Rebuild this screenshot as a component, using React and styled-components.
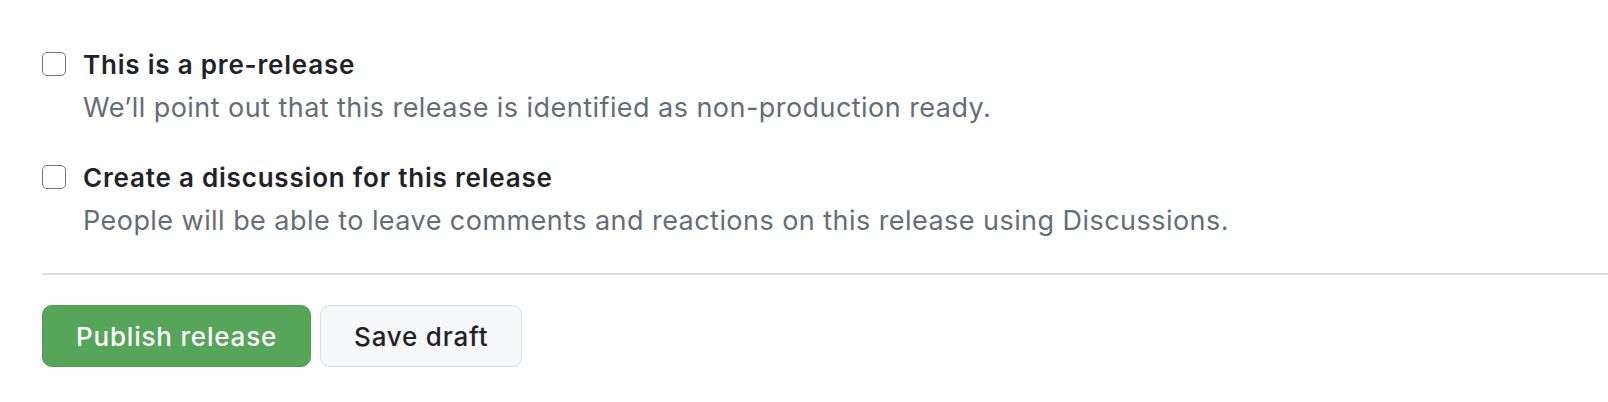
import React from 'react'
import styled, { createGlobalStyle } from 'styled-components'

const GlobalStyle = createGlobalStyle`
    html, body {
        margin: 0;
        padding: 0;
        background: #ffffff;
    }
    body {
        font-family: Inter, "Liberation Sans", sans-serif;
        color: #1f2328;
    }
`

const options = [
    {
        id: 'prerelease',
        title: 'This is a pre-release',
        note: 'We’ll point out that this release is identified as non-production ready.',
    },
    {
        id: 'discussion',
        title: 'Create a discussion for this release',
        note: 'People will be able to leave comments and reactions on this release using Discussions.',
    },
]

const App = () => {
    return (
        <>
            <GlobalStyle />
            <Form onSubmit={(e) => e.preventDefault()}>
                <OptionList>
                    {options.map((opt) => (
                        <Option key={opt.id}>
                            <Checkbox type="checkbox" id={opt.id} />
                            <OptionText>
                                <Title htmlFor={opt.id}>{opt.title}</Title>
                                <Note>{opt.note}</Note>
                            </OptionText>
                        </Option>
                    ))}
                </OptionList>

                <Divider />

                <Actions>
                    <Button type="submit" $primary>
                        Publish release
                    </Button>
                    <Button type="button">Save draft</Button>
                </Actions>
            </Form>
        </>
    )
}

export default App

const Form = styled.form`
    padding: 49px 0 0 42px;
`

const OptionList = styled.div`
    display: flex;
    flex-direction: column;
    gap: 38px;
`

const Option = styled.div`
    display: grid;
    grid-template-columns: 24px 1fr;
    column-gap: 17px;
    align-items: start;
`

const Checkbox = styled.input`
    appearance: none;
    margin: 3px 0 0 0;
    width: 24px;
    height: 24px;
    border: 1.5px solid #6e7781;
    border-radius: 5px;
    background: #ffffff;
    box-sizing: border-box;
`

const OptionText = styled.div`
    display: flex;
    flex-direction: column;
`

const Title = styled.label`
    font-weight: 600;
    font-size: 26px;
    letter-spacing: 0.8px;
    line-height: 32px;
    color: #1f2328;
`

const Note = styled.p`
    margin: 11px 0 0 0;
    font-size: 27px;
    letter-spacing: 0.45px;
    line-height: 32px;
    color: #656d76;
`

const Divider = styled.hr`
    margin: 36px 0 0 0;
    border: 0;
    border-top: 2px solid #d8dee4;
`

const Actions = styled.div`
    margin-top: 30px;
    display: flex;
    gap: 9px;
`

const Button = styled.button`
    height: 62px;
    padding: 0 33px;
    border-radius: 10px;
    font-family: Inter, "Liberation Sans", sans-serif;
    font-size: 26px;
    letter-spacing: 0.8px;
    font-weight: 500;
    border: 1.5px solid ${(p) => (p.$primary ? '#4a9a50' : '#d8dee4')};
    background: ${(p) => (p.$primary ? '#56a55a' : '#f6f8fa')};
    color: ${(p) => (p.$primary ? '#ffffff' : '#1f2328')};
    box-shadow: 0 1px 0 rgba(31, 35, 40, 0.06);
`
